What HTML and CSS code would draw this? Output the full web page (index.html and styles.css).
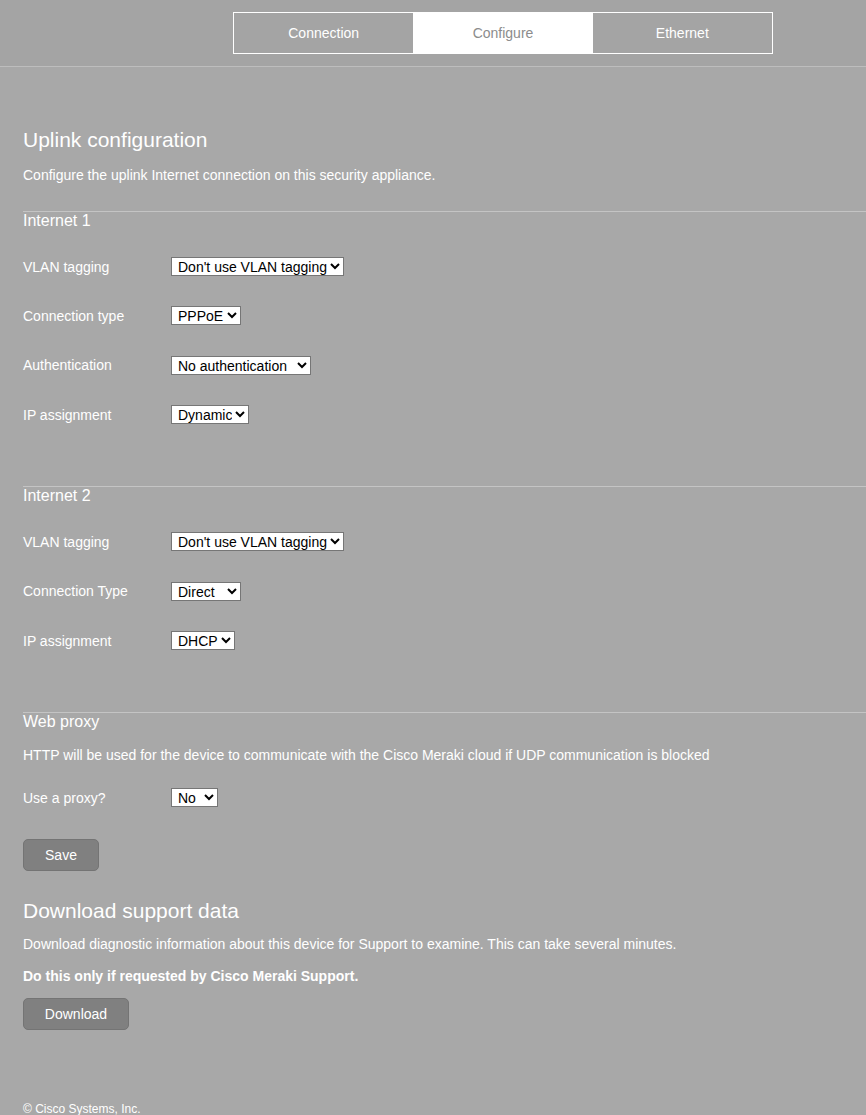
FILE: index.html
```html
<!DOCTYPE html>
<html>
<head>
<meta charset="utf-8">
<link rel="stylesheet" href="styles.css">
</head>
<body>
<header class="topbar">
  <nav class="tabs">
    <a class="tab">Connection</a>
    <a class="tab active">Configure</a>
    <a class="tab">Ethernet</a>
  </nav>
</header>
<main class="content">
  <h1 class="title">Uplink configuration</h1>
  <p class="desc">Configure the uplink Internet connection on this security appliance.</p>

  <section class="group">
    <h2 class="group-title">Internet 1</h2>
    <div class="rows">
      <div class="row"><label class="lbl">VLAN tagging</label>
        <select class="sel w-vlan"><option>Don't use VLAN tagging</option><option>Use VLAN tagging</option></select></div>
      <div class="row"><label class="lbl">Connection type</label>
        <select class="sel w-conn"><option>PPPoE</option><option>Direct</option></select></div>
      <div class="row"><label class="lbl">Authentication</label>
        <select class="sel w-auth"><option>No authentication</option><option>Use authentication</option></select></div>
      <div class="row"><label class="lbl">IP assignment</label>
        <select class="sel w-dyn"><option>Dynamic</option><option>Static</option></select></div>
    </div>
  </section>

  <section class="group">
    <h2 class="group-title">Internet 2</h2>
    <div class="rows">
      <div class="row"><label class="lbl">VLAN tagging</label>
        <select class="sel w-vlan"><option>Don't use VLAN tagging</option><option>Use VLAN tagging</option></select></div>
      <div class="row"><label class="lbl">Connection Type</label>
        <select class="sel w-conn"><option>Direct</option><option>PPPoE</option></select></div>
      <div class="row"><label class="lbl">IP assignment</label>
        <select class="sel w-dhcp"><option>DHCP</option><option>Static</option></select></div>
    </div>
  </section>

  <section class="group proxy">
    <h2 class="group-title">Web proxy</h2>
    <p class="desc proxy-desc">HTTP will be used for the device to communicate with the Cisco Meraki cloud if UDP communication is blocked</p>
    <div class="row short"><label class="lbl">Use a proxy?</label>
      <select class="sel w-no"><option>No</option><option>Yes</option></select></div>
    <button class="btn btn-save">Save</button>
  </section>

  <section class="support">
    <h1 class="title">Download support data</h1>
    <p class="desc">Download diagnostic information about this device for Support to examine. This can take several minutes.</p>
    <p class="desc strong">Do this only if requested by Cisco Meraki Support.</p>
    <button class="btn btn-dl">Download</button>
  </section>

  <footer class="foot">© Cisco Systems, Inc.</footer>
</main>
</body>
</html>
```

FILE: styles.css
```css
html, body {
  margin: 0;
  padding: 0;
}
body {
  background: #a8a8a8;
  font-family: "Liberation Sans", Arial, sans-serif;
  color: #ffffff;
  width: 866px;
  height: 1115px;
  overflow: hidden;
}
.topbar {
  background: #a4a4a4;
  height: 67px;
  border-bottom: 1px solid #bdbdbd;
  box-sizing: border-box;
  padding-top: 12px;
  padding-left: 233px;
}
.tabs {
  display: flex;
  width: 540px;
  height: 42px;
  border: 1px solid #ffffff;
  box-sizing: border-box;
}
.tab {
  flex: 1;
  display: flex;
  align-items: center;
  justify-content: center;
  font-size: 14px;
  color: #ffffff;
}
.tab.active {
  background: #ffffff;
  color: #8c8c8c;
}
.content {
  padding-left: 23px;
  padding-top: 61px;
}
.title {
  font-size: 21px;
  font-weight: normal;
  margin: 0;
  line-height: 24px;
}
.desc {
  font-size: 14px;
  margin: 15px 0 0 0;
  line-height: 16px;
}
.group {
  border-top: 1px solid #c4c4c4;
  margin-top: 28px;
}
.group + .group {
  margin-top: 47px;
}
.group-title {
  font-size: 16px;
  font-weight: normal;
  margin: 0;
  line-height: 17px;
}
.rows {
  margin-top: 13px;
}
.row {
  display: flex;
  align-items: center;
  height: 49.34px;
}
.lbl {
  width: 148px;
  font-size: 14px;
}
.sel {
  font-family: "Liberation Sans", Arial, sans-serif;
  font-size: 14px;
  height: 19px;
  padding: 0 0 0 2px;
  border: 1px solid #767676;
  border-radius: 0;
  background: #ffffff;
  color: #000000;
  box-sizing: border-box;
}
.w-vlan { width: 173px; }
.w-conn { width: 70px; }
.w-auth { width: 140px; }
.w-dyn { width: 78px; }
.w-dhcp { width: 64px; }
.w-no { width: 47px; }
.proxy .proxy-desc {
  margin-top: 17px;
}
.row.short {
  height: 43px;
  margin-top: 13px;
}
.btn {
  font-family: "Liberation Sans", Arial, sans-serif;
  font-size: 14px;
  color: #ffffff;
  background: #808080;
  border: 1px solid #747474;
  border-radius: 5px;
  height: 32px;
  display: block;
}
.btn-save {
  width: 76px;
  margin-top: 20px;
}
.support {
  margin-top: 28px;
}
.support .desc {
  margin-top: 13px;
}
.support .strong {
  font-weight: bold;
  margin-top: 16px;
}
.btn-dl {
  width: 106px;
  margin-top: 14px;
}
.foot {
  font-size: 12px;
  margin-top: 72px;
}
```
